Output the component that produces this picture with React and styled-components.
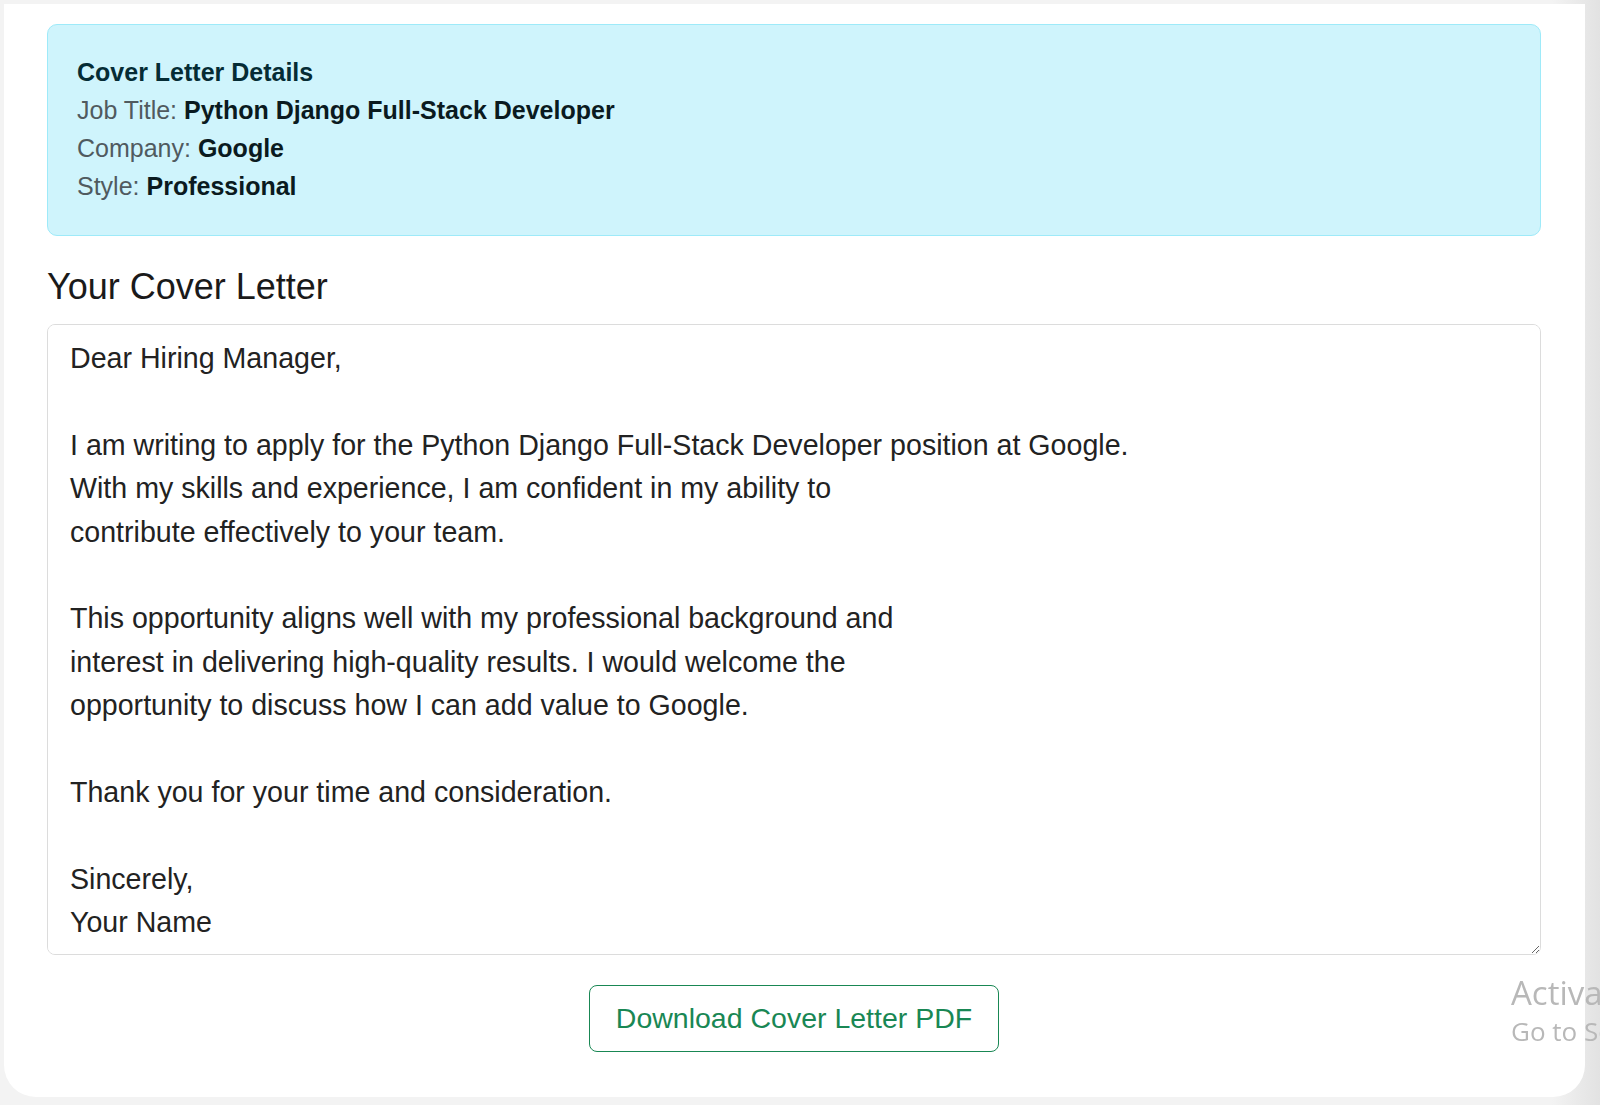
import React from 'react'
import styled, { createGlobalStyle } from 'styled-components'

const Global = createGlobalStyle`
  html, body { margin: 0; padding: 0; background: #ececec; overflow: hidden; }
  body { font-family: "Liberation Sans", Arial, sans-serif; }
`

const Page = styled.div`
  position: relative;
  width: 1600px;
  height: 1105px;
  overflow: hidden;
  padding: 4px 15px 0 4px;
  box-sizing: border-box;
  background: linear-gradient(90deg, #f3f3f3 0%, #f3f3f3 97%, #e2e2e2 100%);
`

const Card = styled.div`
  background: #fff;
  height: 1093px;
  border-radius: 0 0 32px 32px;
  padding: 20px 44px 0 43px;
  box-sizing: border-box;
  display: flex;
  flex-direction: column;
`

const Alert = styled.div`
  background: #cff4fc;
  border: 1.5px solid #9eeaf9;
  border-radius: 10px;
  padding: 31px 29px 20px;
  height: 212px;
  box-sizing: border-box;
  font-size: 25px;
  color: #505a5f;
`

const AlertTitle = styled.div`
  font-weight: bold;
  color: #052c35;
  line-height: 38px;
  margin-top: -3px;
`

const Row = styled.div`
  line-height: 38px;
  b { color: #0a1a20; }
`

const Heading = styled.h2`
  font-weight: normal;
  font-size: 36px;
  color: #1a1a1a;
  margin: 30px 0 16px;
  line-height: 42px;
`

const Letter = styled.textarea`
  height: 631px;
  box-sizing: border-box;
  border: 1.5px solid #dcdcdc;
  border-radius: 8px;
  padding: 12px 22px;
  font-family: "Liberation Sans", Arial, sans-serif;
  font-size: 28.6px;
  line-height: 43.4px;
  color: #222;
  resize: vertical;
  outline: none;
`

const Actions = styled.div`
  display: flex;
  justify-content: center;
  margin-top: 30px;
`

const Button = styled.button`
  width: 410px;
  height: 67px;
  background: #fff;
  border: 1.5px solid #198754;
  border-radius: 8px;
  color: #198754;
  font-family: "Liberation Sans", Arial, sans-serif;
  font-size: 28.5px;
  cursor: pointer;
`

const Watermark = styled.div`
  position: absolute;
  left: 1511px;
  top: 972px;
  color: #b8b8b8;
  font-family: "Open Sans", sans-serif;
  white-space: nowrap;
  line-height: 1.3;
`

const WmBig = styled.div` font-size: 33px; `
const WmSmall = styled.div` font-size: 26px; `

const text = `Dear Hiring Manager,

I am writing to apply for the Python Django Full-Stack Developer position at Google.
With my skills and experience, I am confident in my ability to
contribute effectively to your team.

This opportunity aligns well with my professional background and
interest in delivering high-quality results. I would welcome the
opportunity to discuss how I can add value to Google.

Thank you for your time and consideration.

Sincerely,
Your Name`

export default function App() {
  return (
    <Page>
      <Global />
      <Card>
        <Alert>
          <AlertTitle>Cover Letter Details</AlertTitle>
          <Row>Job Title: <b>Python Django Full-Stack Developer</b></Row>
          <Row>Company: <b>Google</b></Row>
          <Row>Style: <b>Professional</b></Row>
        </Alert>
        <Heading>Your Cover Letter</Heading>
        <Letter defaultValue={text} />
        <Actions>
          <Button>Download Cover Letter PDF</Button>
        </Actions>
      </Card>
      <Watermark>
        <WmBig>Activate Windows</WmBig>
        <WmSmall>Go to Settings</WmSmall>
      </Watermark>
    </Page>
  )
}
